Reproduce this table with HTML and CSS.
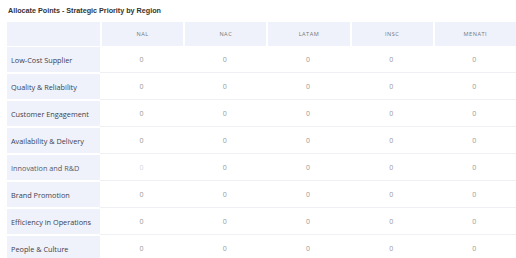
FILE: index.html
```html
<!DOCTYPE html>
<html lang="en">

<head>
    <meta charset="UTF-8">
    <meta name="viewport" content="width=device-width, initial-scale=1.0">
    <title>Allocate Points</title>
    <link rel="stylesheet" href="styles.css">
</head>

<body>
    <div class="title">Allocate Points - Strategic Priority by Region</div>

    <table class="points">
        <thead>
            <tr>
                <th class="corner"></th>
                <th>NAL</th>
                <th>NAC</th>
                <th>LATAM</th>
                <th>INSC</th>
                <th>MENATI</th>
            </tr>
        </thead>
        <tbody>
            <tr>
                <td class="label">Low-Cost Supplier</td>
                <td>0</td><td>0</td><td>0</td><td>0</td><td>0</td>
            </tr>
            <tr>
                <td class="label">Quality &amp; Reliability</td>
                <td>0</td><td>0</td><td>0</td><td>0</td><td>0</td>
            </tr>
            <tr>
                <td class="label">Customer Engagement</td>
                <td>0</td><td>0</td><td>0</td><td>0</td><td>0</td>
            </tr>
            <tr>
                <td class="label">Availability &amp; Delivery</td>
                <td>0</td><td>0</td><td>0</td><td>0</td><td>0</td>
            </tr>
            <tr>
                <td class="label faded">Innovation and R&amp;D</td>
                <td class="muted">0</td><td>0</td><td>0</td><td>0</td><td>0</td>
            </tr>
            <tr>
                <td class="label">Brand Promotion</td>
                <td>0</td><td>0</td><td>0</td><td>0</td><td>0</td>
            </tr>
            <tr>
                <td class="label">Efficiency in Operations</td>
                <td>0</td><td>0</td><td>0</td><td>0</td><td>0</td>
            </tr>
            <tr>
                <td class="label">People &amp; Culture</td>
                <td>0</td><td>0</td><td>0</td><td>0</td><td>0</td>
            </tr>
        </tbody>
    </table>
</body>

</html>
```

FILE: styles.css
```css
body {
    margin: 0;
    font-family: "Open Sans", sans-serif;
    background-color: #FFF;
    color: #333;
    overflow: hidden;
}

.title {
    font-family: "Liberation Sans", Arial, sans-serif;
    font-size: 7.2px;
    font-weight: bold;
    color: #333;
    padding: 6px 0 0 8px;
    height: 22px;
    box-sizing: border-box;
}

.points {
    margin-left: 7px;
    width: 509px;
    table-layout: fixed;
    border-collapse: separate;
    border-spacing: 0;
}

th {
    height: 24px;
    padding: 0;
    background-color: #EFF2FA;
    border-left: 2px solid #FFF;
    font-size: 5.6px;
    font-weight: normal;
    letter-spacing: 0.5px;
    color: #777;
    text-align: center;
}

th.corner {
    width: 93px;
    border-left: 0;
    border-right: 0;
}

td {
    height: 25px;
    padding: 0;
    border-bottom: 1px solid #EEF0F4;
    font-size: 7px;
    color: #999;
    text-align: center;
}

td.label {
    background-color: #EFF2FA;
    border-bottom: 1px solid #FFF;
    border-top: 1px solid #FFF;
    text-align: left;
    padding-left: 4px;
    color: #3C4150;
    font-size: 7.3px;
}

td.faded {
    color: #55596A;
}

td.muted {
    color: #D4D7DE;
}
```
